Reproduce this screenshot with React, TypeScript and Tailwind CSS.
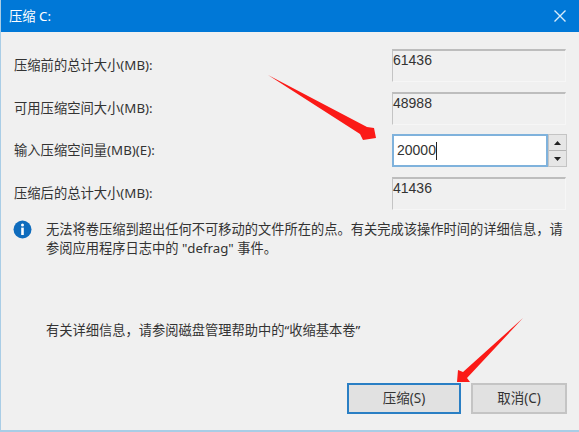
const FONT = "font-['Noto_Sans','Noto_Sans_CJK_SC',sans-serif]";

const ReadOnlyBox = ({ value }: { value: string }) => (
  <div className="h-[33px] w-[174px] border-t-2 border-r border-b border-l border-t-[#bdbdbd] border-l-[#c4c4c4] border-r-[#f6f6f6] border-b-[#f6f6f6] font-['Liberation_Sans'] text-[14px] leading-[19px] text-[#333]">
    {value}
  </div>
);

const Row = ({ label, children }: { label: string; children: React.ReactNode }) => (
  <div className="flex h-[33px] items-center justify-between">
    <span className="text-[13.3px] leading-[17px] text-[#333]">{label}</span>
    {children}
  </div>
);

const Spinner = () => (
  <div className="flex h-[33px] w-[175px] items-stretch">
    <div className="flex flex-1 items-center border-2 border-[#7fb2dc] bg-white pl-[3px] font-['Liberation_Sans'] text-[14px] leading-[17px] text-[#333]">
      20000
      <span className="h-[18px] w-[1px] bg-[#222]" />
    </div>
    <div className="flex w-[19px] flex-col border border-[#c4c4c4] bg-[#e6e6e6]">
      <div className="flex flex-1 items-center justify-center border-b border-[#b5b5b5]">
        <svg width="7" height="4" viewBox="0 0 7 4">
          <path d="M3.5 0 7 4H0z" fill="#222" />
        </svg>
      </div>
      <div className="flex flex-1 items-center justify-center">
        <svg width="7" height="4" viewBox="0 0 7 4">
          <path d="M0 0h7L3.5 4z" fill="#222" />
        </svg>
      </div>
    </div>
  </div>
);

export default function App() {
  return (
    <div className={`relative flex h-[432px] w-[579px] flex-col overflow-hidden border-b-2 border-l border-[#a9cde6] bg-[#f0f0f0] ${FONT}`}>
      {/* Title bar */}
      <div className="flex h-[32px] shrink-0 items-center justify-between bg-[#0078d7] pl-[8px] pr-[13px] text-white">
        <span className="text-[13.3px] leading-[17px]">压缩 C:</span>
        <svg width="12" height="12" viewBox="0 0 12 12" stroke="#d8ecfa" strokeWidth="1.4">
          <path d="M0.5 0.5 11.5 11.5M11.5 0.5 0.5 11.5" />
        </svg>
      </div>

      {/* Form */}
      <div className="flex flex-col gap-[9.5px] pl-[13px] pr-[12px] pt-[17px]">
        <Row label="压缩前的总计大小(MB):">
          <div className="mr-[1px]">
            <ReadOnlyBox value="61436" />
          </div>
        </Row>
        <Row label="可用压缩空间大小(MB):">
          <div className="mr-[1px]">
            <ReadOnlyBox value="48988" />
          </div>
        </Row>
        <Row label="输入压缩空间量(MB)(E):">
          <Spinner />
        </Row>
        <Row label="压缩后的总计大小(MB):">
          <div className="mr-[1px]">
            <ReadOnlyBox value="41436" />
          </div>
        </Row>
      </div>

      {/* Info */}
      <div className="mt-[10px] flex gap-[14px] pl-[12px] pr-[8px]">
        <svg width="19" height="19" viewBox="0 0 19 19" className="shrink-0">
          <circle cx="9.5" cy="9.5" r="9" fill="#0f6cbd" />
          <circle cx="9.5" cy="5" r="1.5" fill="#fff" />
          <rect x="8.2" y="7.6" width="2.6" height="7.4" fill="#fff" />
        </svg>
        <div className="text-[13.25px] leading-[19px] text-[#333]">
          <p>无法将卷压缩到超出任何不可移动的文件所在的点。有关完成该操作时间的详细信息，请</p>
          <p>参阅应用程序日志中的 "defrag" 事件。</p>
          <p className="mt-[63px]">有关详细信息，请参阅磁盘管理帮助中的“收缩基本卷”</p>
        </div>
      </div>

      {/* Buttons */}
      <div className="mt-auto mb-[16px] flex justify-end gap-[10px] pr-[12px]">
        <button className="h-[31px] w-[114px] border-2 border-[#2a7fc4] bg-[#e1e1e1] text-[13.5px] text-[#333]">
          压缩(S)
        </button>
        <button className="h-[31px] w-[96px] border-2 border-[#c4c4c4] bg-[#e1e1e1] text-[13.5px] text-[#333]">
          取消(C)
        </button>
      </div>

      {/* Red arrows drawn over the dialog */}
      <svg width="579" height="432" viewBox="0 0 579 432" className="pointer-events-none absolute left-[-1px] top-0">
        <path d="M268 75 367 127 374 128 376 138 363 140 360 134Z" fill="#fb1a17" />
        <path d="M523 318 463 372 458 370 457 382 470 382 467 378Z" fill="#fb1a17" />
      </svg>
    </div>
  );
}
